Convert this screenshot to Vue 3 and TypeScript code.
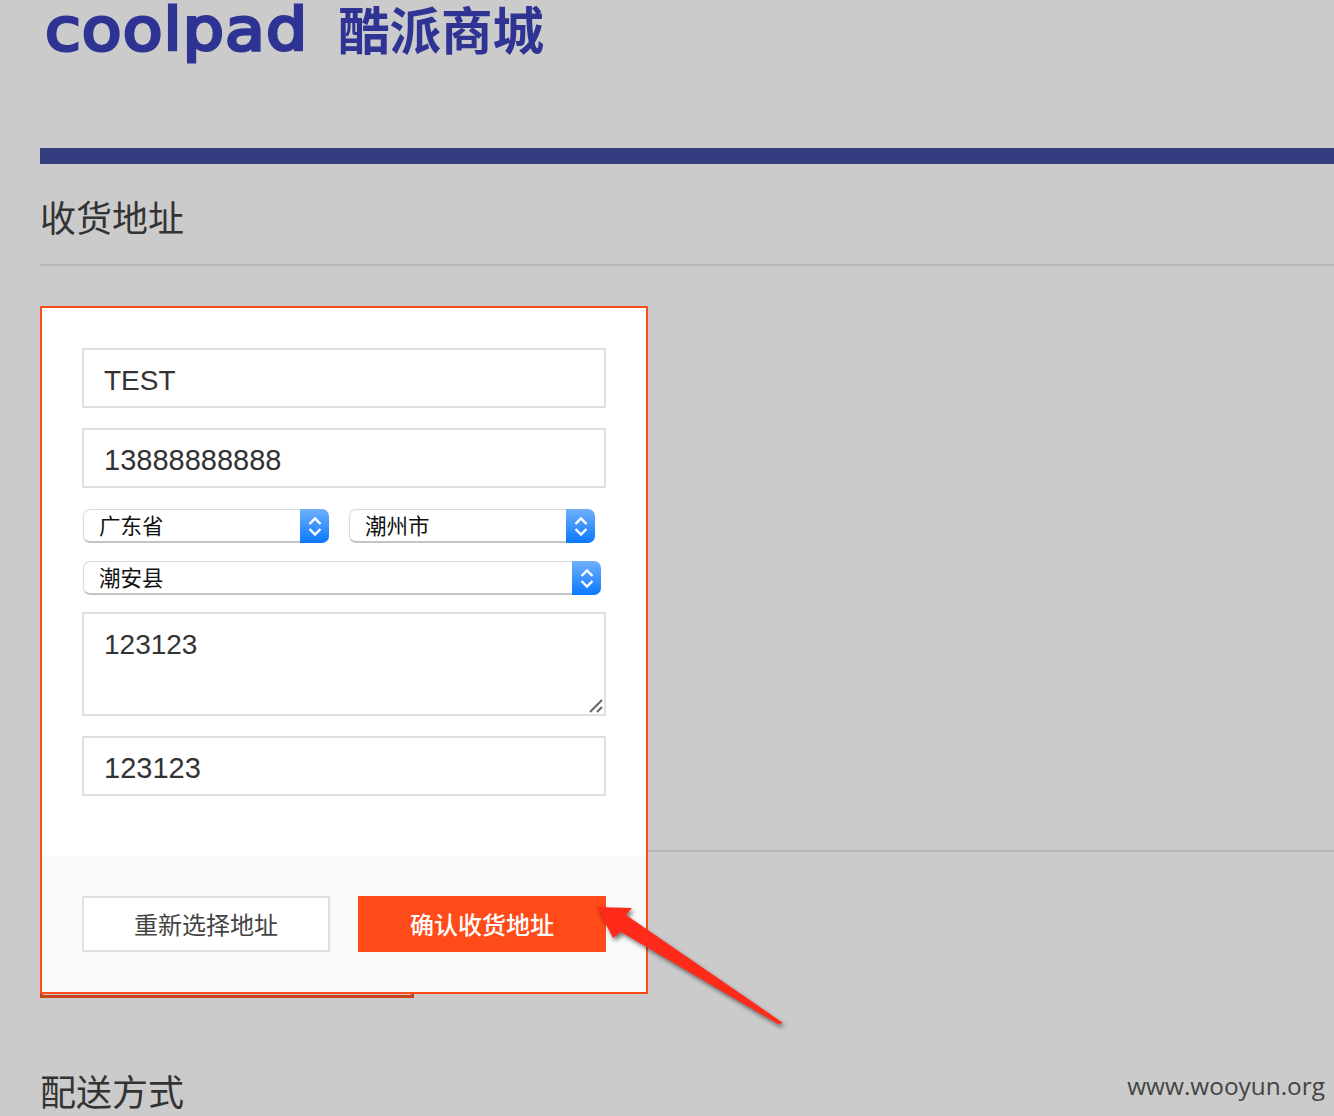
<script setup lang="ts">
const topSelects: string[] = ['广东省', '潮州市']
const chevrons = 'M4.5 9 L10 3.5 L15.5 9 M4.5 14 L10 19.5 L15.5 14'
</script>

<template>
  <div class="page">
    <header class="logo">
      <span class="logo-box"><span class="logo-en">coolpad</span></span>
      <span class="logo-cn">酷派商城</span>
    </header>
    <div class="bar"></div>
    <h2 class="title first">收货地址</h2>

    <section class="address">
      <div class="old-card"></div>
      <form class="modal">
        <div class="fields">
          <input class="field test" value="TEST" readonly />
          <input class="field phone" value="13888888888" readonly />
          <div class="select-row">
            <div v-for="s in topSelects" :key="s" class="select half">
              <span class="select-text">{{ s }}</span>
              <span class="select-btn">
                <svg width="20" height="23" viewBox="0 0 20 23"><path :d="chevrons" /></svg>
              </span>
            </div>
          </div>
          <div class="select wide">
            <span class="select-text">潮安县</span>
            <span class="select-btn">
              <svg width="20" height="23" viewBox="0 0 20 23"><path :d="chevrons" /></svg>
            </span>
          </div>
          <div class="area-wrap">
            <textarea class="area" readonly>123123</textarea>
            <svg class="grip" width="16" height="16" viewBox="0 0 16 16">
              <path d="M2 14 L14 2 M9 14 L14 9" />
            </svg>
          </div>
          <input class="field zip" value="123123" readonly />
        </div>
        <div class="actions">
          <button type="button" class="btn ghost">重新选择地址</button>
          <button type="button" class="btn primary">确认收货地址</button>
        </div>
      </form>
    </section>

    <h2 class="title second">配送方式</h2>

    <svg class="arrow" width="200" height="130" viewBox="590 900 200 130">
      <path d="M597 907 L632 908 L626 915 L783 1023 L778 1024 L621 932 L613 938 Z" />
    </svg>
    <div class="mark">www.wooyun.org</div>
  </div>
</template>

<style>
html, body { margin: 0; padding: 0; background: #cbcbcb; }
</style>

<style scoped>
.page {
  position: relative;
  box-sizing: border-box;
  width: 1334px;
  height: 1116px;
  overflow: hidden;
  padding-left: 40px;
  background: #cbcbcb;
  font-family: "Liberation Sans", "Noto Sans CJK SC", sans-serif;
  color: #333;
}
.logo {
  display: flex;
  align-items: flex-start;
  height: 148px;
  box-sizing: border-box;
  padding: 0 0 0 5px;
  color: #2f3393;
  filter: blur(0.5px);
}
.logo-box {
  width: 293px;
}
.logo-en {
  display: inline-block;
  font-family: "DejaVu Sans", sans-serif;
  font-size: 58px;
  line-height: 60px;
  font-weight: 400;
  letter-spacing: 1px;
  -webkit-text-stroke: 3px #2f3393;
  transform: scaleX(1.12);
  transform-origin: left center;
}
.logo-cn {
  font-family: "Noto Sans CJK SC", sans-serif;
  font-size: 51.5px;
  line-height: 56px;
  font-weight: 700;
}
.bar { height: 16px; background: #343c80; }
.title {
  margin: 0;
  font-size: 36px;
  line-height: 36px;
  font-weight: 400;
  color: #333;
  font-family: "Noto Sans CJK SC", sans-serif;
}
.first {
  padding: 34px 0 30px;
  border-bottom: 2px solid #b6b6b6;
}
.second { margin-top: 220px; }
.address {
  position: relative;
  box-sizing: border-box;
  height: 586px;
  border-bottom: 2px solid #b6b6b6;
}
.old-card {
  position: absolute;
  left: 0;
  top: 40px;
  box-sizing: border-box;
  width: 374px;
  height: 692px;
  border: 3px solid #c9421c;
}
.modal {
  position: absolute;
  left: 0;
  top: 40px;
  box-sizing: border-box;
  width: 608px;
  height: 688px;
  display: flex;
  flex-direction: column;
  border: 2px solid #ff4b1a;
  background: #fff;
}
.fields {
  flex: 1;
  display: flex;
  flex-direction: column;
  padding: 40px 40px 0;
}
.field {
  display: block;
  box-sizing: border-box;
  width: 524px;
  height: 60px;
  padding: 4px 20px 0;
  margin: 0 0 20px;
  border: 2px solid #e0e0e0;
  background: #fff;
  outline: none;
  color: #333;
  font-family: "Liberation Sans", sans-serif;
  font-size: 29px;
}
.test { font-size: 28px; padding-top: 5px; }
.phone { margin-bottom: 21px; }
.select-row {
  display: flex;
  gap: 20px;
  margin: 0 0 18px 1px;
}
.select {
  display: flex;
  box-sizing: border-box;
  height: 34px;
}
.half { width: 246px; }
.wide { width: 518px; margin: 0 0 17px 1px; }
.select-text {
  flex: 1;
  box-sizing: border-box;
  padding-left: 15px;
  background: #fff;
  border: 1px solid #dadada;
  border-bottom: 2px solid #c4c4c4;
  border-right: none;
  border-radius: 7px 0 0 7px;
  font-family: "Noto Sans CJK SC", sans-serif;
  font-size: 21.5px;
  line-height: 29px;
  color: #111;
}
.select-btn {
  display: flex;
  align-items: center;
  justify-content: center;
  width: 29px;
  border-radius: 0 7px 7px 0;
  background: linear-gradient(#6fb0fb, #0a78ff);
}
.select-btn path {
  fill: none;
  stroke: #fff;
  stroke-width: 2.4;
}
.area-wrap {
  position: relative;
  width: 524px;
  height: 104px;
  margin-bottom: 20px;
}
.area {
  display: block;
  box-sizing: border-box;
  width: 524px;
  height: 104px;
  padding: 14px 20px;
  border: 2px solid #e0e0e0;
  background: #fff;
  outline: none;
  resize: none;
  color: #333;
  font-family: "Liberation Sans", sans-serif;
  font-size: 28px;
  line-height: 34px;
}
.grip {
  position: absolute;
  right: 2px;
  bottom: 2px;
}
.grip path {
  fill: none;
  stroke: #666;
  stroke-width: 2;
}
.zip { margin-bottom: 0; }
.actions {
  display: flex;
  gap: 28px;
  height: 136px;
  box-sizing: border-box;
  padding: 40px 40px 40px;
  background: #fafafa;
}
.btn {
  box-sizing: border-box;
  width: 248px;
  height: 56px;
  padding: 0 0 2px;
  font-family: "Noto Sans CJK SC", sans-serif;
  font-size: 24px;
  cursor: pointer;
}
.ghost {
  border: 2px solid #e0e0e0;
  background: #fff;
  color: #444;
}
.primary {
  border: none;
  background: #ff4b1a;
  color: #fff;
  font-weight: 500;
}
.arrow {
  position: absolute;
  left: 590px;
  top: 900px;
  overflow: visible;
  filter: drop-shadow(2px 3px 2px rgba(0, 0, 0, 0.5));
}
.arrow path { fill: #ff2a1a; }
.mark {
  position: absolute;
  right: 9px;
  top: 1069px;
  font-family: "Open Sans", sans-serif;
  font-size: 24.4px;
  line-height: 34px;
  color: #444;
}
</style>
